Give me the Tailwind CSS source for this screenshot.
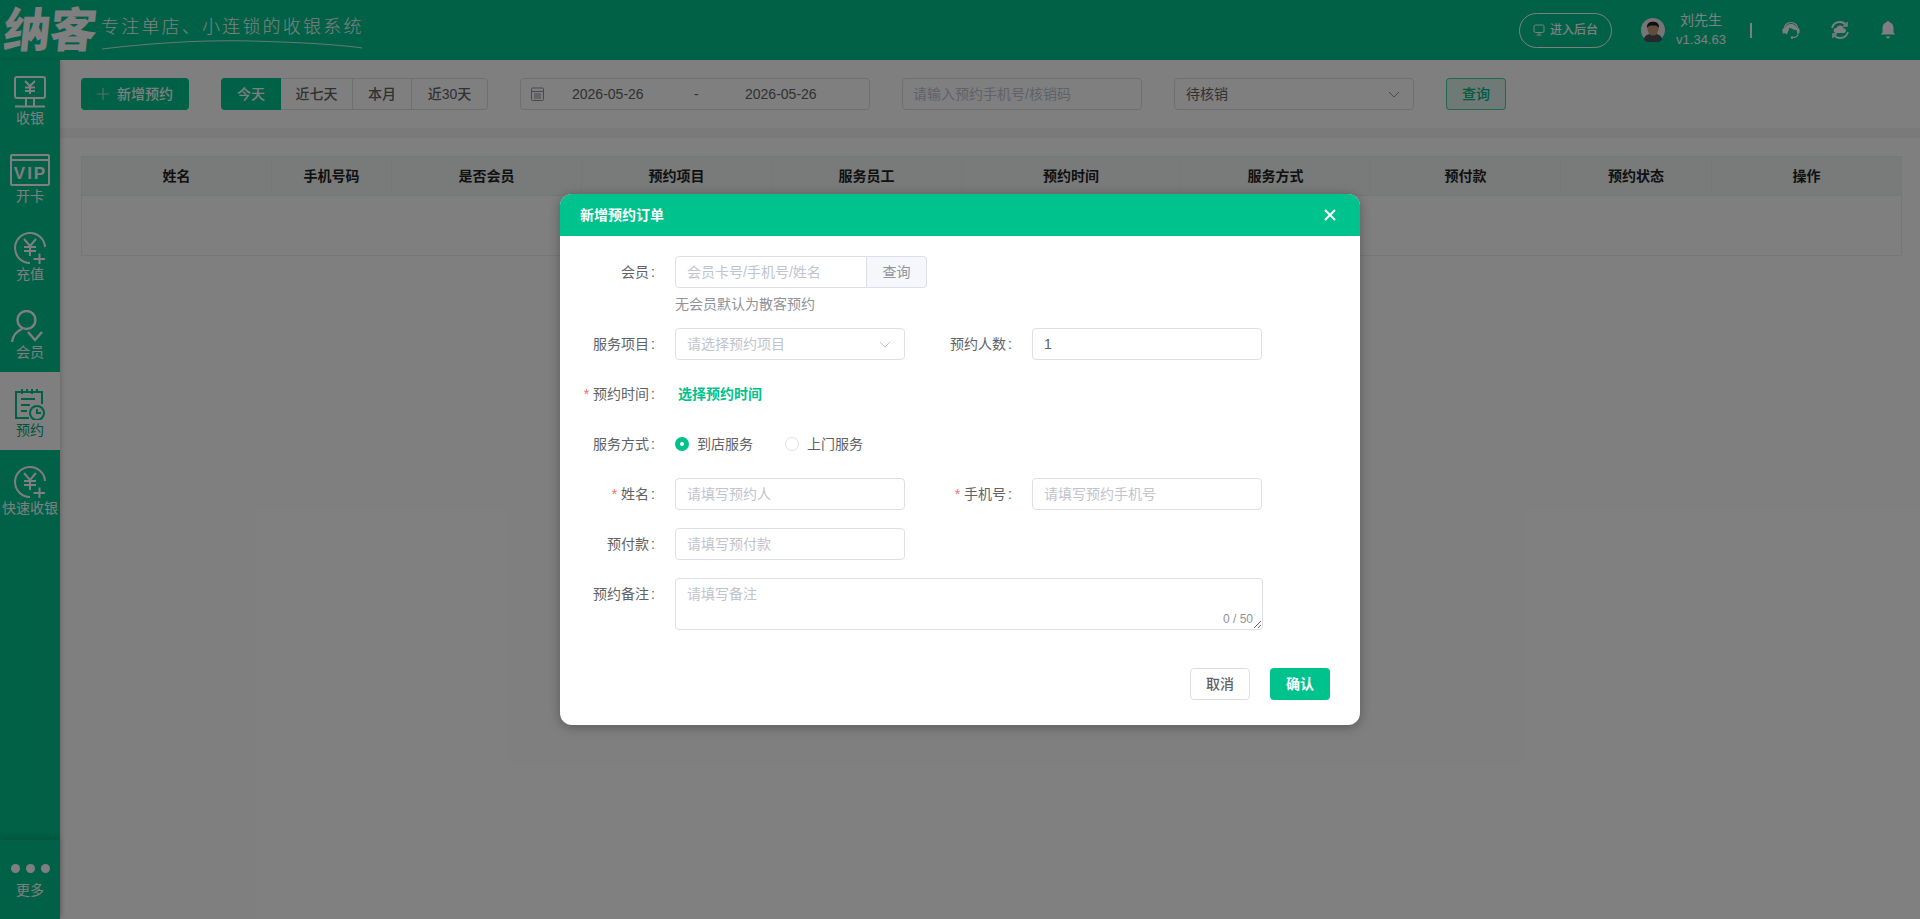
<!DOCTYPE html>
<html lang="zh-CN">
<head>
    <meta charset="UTF-8">
    <meta name="viewport" content="width=device-width, initial-scale=1.0">
    <script src="https://cdn.jsdelivr.net/npm/@tailwindcss/browser@4"></script>
    <title>新增预约订单</title>
</head>

<body class="font-['Liberation_Sans','Noto_Sans_CJK_SC',sans-serif] text-sm text-[#606266] bg-white">
<div class="relative w-[1920px] h-[919px] overflow-hidden flex flex-col">

    <!-- top bar -->
    <header class="h-[60px] shrink-0 bg-[#00c28c] flex items-center text-white">
        <div class="relative w-[400px] h-[60px] flex items-center pl-[4px]">
            <span class="text-[47px] font-black leading-none tracking-[-1px] -skew-x-6">纳客</span>
            <span class="ml-[5px] text-[18px] font-light tracking-[2.2px] leading-none whitespace-nowrap -mt-[6px]">专注单店、小连锁的收银系统</span>
            <svg class="absolute left-[100px] top-[38px]" width="264" height="12" viewBox="0 0 264 12" fill="none" stroke="white" stroke-width="0.8">
                <path d="M2 11C60 4 110 2 150 3C190 4 235 6 262 10" />
            </svg>
        </div>
        <div class="ml-auto flex items-center">
            <button class="w-[93px] h-[35px] border border-white rounded-full flex items-center justify-center gap-[5px] text-xs font-medium">
                <svg width="12" height="12" viewBox="0 0 12 12" fill="none" stroke="white"><rect x="1" y="1" width="10" height="7.5" rx="1.5"/><path d="M3.5 11h5M6 8.5V11"/></svg>
                进入后台
            </button>
            <svg class="ml-[29px]" width="24" height="24" viewBox="0 0 26 26">
                <circle cx="13" cy="13" r="13" fill="#ececec"/>
                <path d="M3 23c1-5 6-6 10-6s9 1 10 6a13 13 0 0 1-20 0Z" fill="#4a5058"/>
                <ellipse cx="13" cy="12" rx="6" ry="7" fill="#c59a78"/>
                <path d="M6.5 11C6 5 10 4 13 4s7 1 6.500 7C18 8 16 8 13 8s-5 0-6.500 3Z" fill="#1f1f22"/>
            </svg>
            <div class="ml-[10px] w-[52px] flex flex-col items-center">
                <span class="leading-[20px]">刘先生</span>
                <span class="leading-[20px] text-[13px]">v1.34.63</span>
            </div>
            <div class="ml-[23px] w-[2px] h-[15px] bg-white"></div>
            <svg class="ml-[29px]" width="20" height="20" viewBox="0 0 20 20" fill="white">
                <path d="M3 9.500C3 5.500 6 2.500 10 2.500s7 3 7 7" fill="none" stroke="white" stroke-width="1.100"/>
                <path d="M3.500 11C3.500 6.500 6.500 4 10 4s6.500 2.500 6.500 6.500C14 10 11 9 8.500 7.500 8 10.500 6.500 12 6 14.500 4.500 14 3.500 12.500 3.500 11Z"/>
                <rect x="1.500" y="8.500" width="2.500" height="5" rx="1"/>
                <rect x="16" y="8.500" width="2.500" height="5" rx="1"/>
                <path d="M17 13.500c0 2.500-2.500 4-5 4" fill="none" stroke="white" stroke-width="1.200"/>
                <circle cx="11" cy="17.500" r="1.300"/>
            </svg>
            <svg class="ml-[29px]" width="20" height="20" viewBox="0 0 20 20" fill="none" stroke="white" stroke-width="1.800">
                <path d="M2 8C3 4.500 6 2 10 2c2.500 0 4.500 1 6 3"/>
                <path d="M18 12c-1 3.500-4 6-8 6-2.500 0-4.500-1-6-3"/>
                <path d="M17 2v4h-4M3 18v-4h4" stroke-width="1.500"/>
                <path d="M6 13a2.500 2.500 0 0 1 .3-5 3.800 3.800 0 0 1 7.300.4 2.300 2.300 0 0 1 .2 4.600Z" fill="white" stroke="none"/>
            </svg>
            <svg class="ml-[28px] mr-[22px]" width="20" height="20" viewBox="0 0 20 20" fill="white">
                <path d="M10 1c.8 0 1.300.5 1.300 1.300 2.700.6 4.200 2.700 4.200 5.700v4.500l1.800 2H2.700l1.800-2V8c0-3 1.500-5.100 4.200-5.700C8.700 1.500 9.200 1 10 1Z"/>
                <path d="M8 16.500h4a2 2 0 0 1-4 0Z"/>
            </svg>
        </div>
    </header>

    <div class="flex flex-1 min-h-0">
        <!-- left nav -->
        <nav class="relative z-10 w-[60px] shrink-0 bg-[#00c28c] text-white flex flex-col shadow-[2px_0_4px_rgba(0,0,0,0.15)]">
            <a class="h-[78px] flex flex-col items-center">
                <svg class="mt-[16px]" width="40" height="32" viewBox="0 0 40 32" fill="none" stroke="white" stroke-width="2">
                    <rect x="5" y="1" width="30" height="21" rx="2"/>
                    <path d="M15 5l5 5 5-5M20 10v8M15 11.500h10M15 15h10"/>
                    <path d="M16 22v8M24 22v8M5 30.500h30"/>
                </svg>
                <span class="leading-[20px]">收银</span>
            </a>
            <a class="h-[78px] flex flex-col items-center">
                <svg class="mt-[16px]" width="40" height="32" viewBox="0 0 40 32" fill="none" stroke="white" stroke-width="2">
                    <rect x="1" y="1" width="38" height="30" rx="1"/>
                    <path d="M1 6h38"/>
                    <text x="20.500" y="25" text-anchor="middle" fill="white" stroke="none" font-size="17" font-weight="700" letter-spacing="2">VIP</text>
                </svg>
                <span class="leading-[20px]">开卡</span>
            </a>
            <a class="h-[78px] flex flex-col items-center">
                <svg class="mt-[16px]" width="40" height="32" viewBox="0 0 40 32" fill="none" stroke="white" stroke-width="2">
                    <path d="M35 15A15 15 0 1 0 20 31"/>
                    <path d="M14 7l6 7 6-7M20 14v10M14 15h12M14 19h12"/>
                    <path d="M23.500 27h11.500M29.500 21.500v11"/>
                </svg>
                <span class="leading-[20px]">充值</span>
            </a>
            <a class="h-[78px] flex flex-col items-center">
                <svg class="mt-[16px]" width="40" height="32" viewBox="0 0 40 32" fill="none" stroke="white" stroke-width="2.400">
                    <circle cx="16.500" cy="10" r="9"/>
                    <path d="M2 32c1-7 5-11 10-13"/>
                    <path d="M18 22l7 8 7-8"/>
                </svg>
                <span class="leading-[20px]">会员</span>
            </a>
            <a class="h-[78px] flex flex-col items-center bg-white text-[#00a778]">
                <svg class="mt-[16px]" width="40" height="32" viewBox="0 0 40 32" fill="none" stroke="#00c28c" stroke-width="2">
                    <path d="M19 30H6V4h26v12"/>
                    <path d="M12 1v5M17 1v3M22 1v5M27 1v3"/>
                    <path d="M11 11h14M11 17h9M11 23h6"/>
                    <circle cx="27" cy="25" r="7"/>
                    <path d="M27 21v4h4"/>
                </svg>
                <span class="leading-[20px]">预约</span>
            </a>
            <a class="h-[78px] flex flex-col items-center">
                <svg class="mt-[16px]" width="40" height="32" viewBox="0 0 40 32" fill="none" stroke="white" stroke-width="2">
                    <path d="M35 15A15 15 0 1 0 20 31"/>
                    <path d="M14 7l6 7 6-7M20 14v10M14 15h12M14 19h12"/>
                    <path d="M23.500 27h11.500M29.500 21.500v11"/>
                </svg>
                <span class="leading-[20px] whitespace-nowrap">快速收银</span>
            </a>
            <a class="mt-auto h-[79px] flex flex-col items-center shadow-[0_-3px_6px_rgba(0,0,0,0.15)]">
                <span class="mt-[24px] flex gap-[6px]">
                    <i class="block size-[9px] rounded-full bg-white"></i>
                    <i class="block size-[9px] rounded-full bg-white"></i>
                    <i class="block size-[9px] rounded-full bg-white"></i>
                </span>
                <span class="mt-[7px] leading-[20px]">更多</span>
            </a>
        </nav>

        <main class="flex-1 min-w-0 bg-white flex flex-col">
            <!-- filters -->
            <div class="h-[68px] shrink-0 flex items-center pl-[21px]">
                <button class="w-[108px] h-[32px] rounded bg-[#00c28c] text-white font-medium flex items-center justify-center gap-[8px]">
                    <svg width="12" height="12" viewBox="0 0 12 12" stroke="#9fe6d0" stroke-width="1.200"><path d="M6 0v12M0 6h12"/></svg>
                    新增预约
                </button>
                <div class="ml-[32px] w-[267px] h-[32px] flex rounded border border-[#dcdfe6] font-medium">
                    <span class="w-[60px] -my-px -ml-px bg-[#00c28c] text-white rounded-l flex items-center justify-center">今天</span>
                    <span class="w-[72px] border-r border-[#dcdfe6] flex items-center justify-center">近七天</span>
                    <span class="w-[59px] border-r border-[#dcdfe6] flex items-center justify-center">本月</span>
                    <span class="flex-1 flex items-center justify-center">近30天</span>
                </div>
                <div class="ml-[32px] w-[350px] h-[32px] rounded border border-[#dcdfe6] flex items-center pl-[10px]">
                    <svg width="13" height="14" viewBox="0 0 13 14" fill="none" stroke="#909399"><rect x="0.500" y="1" width="12" height="12.500" rx="1"/><path d="M0.500 4.500h12M3 7h7M3 9h7M3 11h7"/></svg>
                    <span class="ml-[28px] w-[122px]">2026-05-26</span>
                    <span class="w-[51px]">-</span>
                    <span>2026-05-26</span>
                </div>
                <input class="ml-[32px] w-[240px] h-[32px] rounded border border-[#dcdfe6] px-[10px] outline-none placeholder:text-[#c0c4cc]" placeholder="请输入预约手机号/核销码">
                <div class="ml-[32px] w-[240px] h-[32px] rounded border border-[#dcdfe6] flex items-center justify-between pl-[11px] pr-[13px]">
                    <span>待核销</span>
                    <svg width="12" height="7" viewBox="0 0 12 7" fill="none" stroke="#909399"><path d="M1 1l5 5 5-5"/></svg>
                </div>
                <button class="ml-[32px] w-[60px] h-[32px] rounded border border-[#00c28c]/70 bg-[#dff5ee] text-[#00b383] font-medium">查询</button>
            </div>
            <div class="h-[10px] shrink-0 bg-[#f5f5f5]"></div>
            <!-- table -->
            <div class="mt-[18px] ml-[21px] w-[1821px] h-[100px] border border-[#ebeef2] text-[#222] font-bold">
                <div class="h-[39px] bg-[#f3f6f5] border-b border-[#ebeef2] grid grid-cols-[190px_120px_190px_190px_190px_219px_190px_190px_151px_1fr] items-stretch text-center leading-[38px] [&>span]:border-r [&>span]:border-[#ebeef2]">
                    <span>姓名</span>
                    <span>手机号码</span>
                    <span>是否会员</span>
                    <span>预约项目</span>
                    <span>服务员工</span>
                    <span>预约时间</span>
                    <span>服务方式</span>
                    <span>预付款</span>
                    <span>预约状态</span>
                    <span class="!border-r-0">操作</span>
                </div>
            </div>
        </main>
    </div>

    <!-- modal -->
    <div class="absolute inset-0 z-20 bg-black/50 flex justify-center pt-[194px]">
        <div class="w-[800px] h-[531px] bg-white rounded-[12px] overflow-hidden shadow-[0_2px_12px_rgba(0,0,0,0.3)] flex flex-col">
            <div class="h-[42px] shrink-0 bg-[#00c28c] text-white font-bold flex items-center justify-between pl-[20px] pr-[24px]">
                <span>新增预约订单</span>
                <svg width="12" height="12" viewBox="0 0 12 12" stroke="white" stroke-width="2"><path d="M1 1l10 10M11 1L1 11"/></svg>
            </div>
            <div class="flex flex-col">
                <div class="mt-[20px] flex h-[32px] items-center">
                    <label class="w-[95px] text-right">会员<span class="ml-[2px]">:</span></label>
                    <input class="ml-[20px] w-[192px] h-[32px] rounded-l border border-[#dcdfe6] px-[11px] outline-none placeholder:text-[#c0c4cc]" placeholder="会员卡号/手机号/姓名">
                    <button class="w-[60px] h-[32px] rounded-r border border-l-0 border-[#dcdfe6] bg-[#f5f7fa] text-[#909399]">查询</button>
                </div>
                <div class="mt-[6px] h-[20px] pl-[115px] leading-[20px] text-[#909399]">无会员默认为散客预约</div>
                <div class="mt-[14px] flex h-[32px] items-center">
                    <label class="w-[95px] text-right">服务项目<span class="ml-[2px]">:</span></label>
                    <div class="ml-[20px] w-[230px] h-[32px] rounded border border-[#dcdfe6] flex items-center justify-between pl-[11px] pr-[13px] text-[#c0c4cc]">
                        <span>请选择预约项目</span>
                        <svg width="12" height="7" viewBox="0 0 12 7" fill="none" stroke="#c0c4cc"><path d="M1 1l5 5 5-5"/></svg>
                    </div>
                    <label class="w-[107px] text-right">预约人数<span class="ml-[2px]">:</span></label>
                    <input class="ml-[20px] w-[230px] h-[32px] rounded border border-[#dcdfe6] px-[11px] outline-none" value="1">
                </div>
                <div class="mt-[18px] flex h-[32px] items-center">
                    <label class="w-[95px] text-right"><span class="text-[#f56c6c] mr-[4px]">*</span>预约时间<span class="ml-[2px]">:</span></label>
                    <a class="ml-[23px] text-[#00c28c] font-bold">选择预约时间</a>
                </div>
                <div class="mt-[18px] flex h-[32px] items-center">
                    <label class="w-[95px] text-right">服务方式<span class="ml-[2px]">:</span></label>
                    <span class="ml-[20px] size-[14px] rounded-full bg-[#00c28c] flex items-center justify-center"><i class="block size-[4px] rounded-full bg-white"></i></span>
                    <span class="ml-[8px]">到店服务</span>
                    <span class="ml-[32px] size-[14px] rounded-full border border-[#dcdfe6]"></span>
                    <span class="ml-[8px]">上门服务</span>
                </div>
                <div class="mt-[18px] flex h-[32px] items-center">
                    <label class="w-[95px] text-right"><span class="text-[#f56c6c] mr-[4px]">*</span>姓名<span class="ml-[2px]">:</span></label>
                    <input class="ml-[20px] w-[230px] h-[32px] rounded border border-[#dcdfe6] px-[11px] outline-none placeholder:text-[#c0c4cc]" placeholder="请填写预约人">
                    <label class="w-[107px] text-right"><span class="text-[#f56c6c] mr-[4px]">*</span>手机号<span class="ml-[2px]">:</span></label>
                    <input class="ml-[20px] w-[230px] h-[32px] rounded border border-[#dcdfe6] px-[11px] outline-none placeholder:text-[#c0c4cc]" placeholder="请填写预约手机号">
                </div>
                <div class="mt-[18px] flex h-[32px] items-center">
                    <label class="w-[95px] text-right">预付款<span class="ml-[2px]">:</span></label>
                    <input class="ml-[20px] w-[230px] h-[32px] rounded border border-[#dcdfe6] px-[11px] outline-none placeholder:text-[#c0c4cc]" placeholder="请填写预付款">
                </div>
                <div class="mt-[18px] flex h-[52px]">
                    <label class="w-[95px] text-right leading-[32px]">预约备注<span class="ml-[2px]">:</span></label>
                    <div class="relative ml-[20px] w-[588px] h-[52px]">
                        <textarea class="block w-full h-full rounded border border-[#dcdfe6] px-[11px] py-[5px] leading-[20px] outline-none placeholder:text-[#c0c4cc]" placeholder="请填写备注"></textarea>
                        <span class="absolute right-[10px] bottom-[3px] text-xs text-[#909399] leading-[16px]">0 / 50</span>
                    </div>
                </div>
                <div class="mt-[38px] pr-[30px] flex justify-end gap-[20px]">
                    <button class="w-[60px] h-[32px] rounded border border-[#dcdfe6] font-medium">取消</button>
                    <button class="w-[60px] h-[32px] rounded bg-[#00c28c] text-white font-bold">确认</button>
                </div>
            </div>
        </div>
    </div>
</div>
</body>
</html>
